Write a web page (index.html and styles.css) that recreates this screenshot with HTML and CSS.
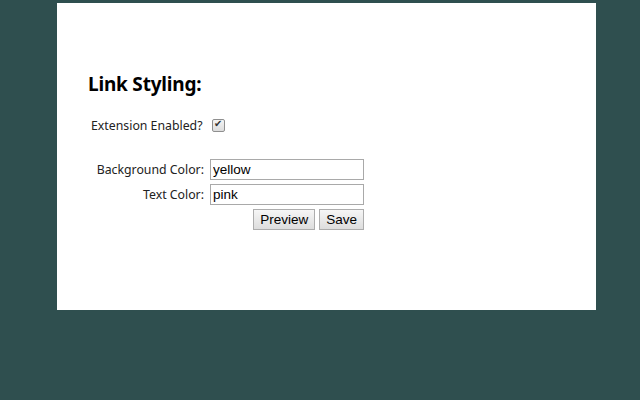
FILE: index.html
```html
<!DOCTYPE html>
<html lang="en">
<head>
  <meta charset="UTF-8">
  <title>Link Styling Options</title>
  <link rel="stylesheet" href="styles.css">
</head>
<body>
  <div class="panel">
    <h2 class="title">Link Styling:</h2>

    <div class="enabled-row">
      <label for="enabled">Extension Enabled?</label>
      <input type="checkbox" id="enabled" checked>
    </div>

    <div class="fields">
      <label for="bg">Background Color:</label>
      <input type="text" id="bg" value="yellow">
      <label for="fg">Text Color:</label>
      <input type="text" id="fg" value="pink">
      <div class="buttons">
        <button>Preview</button>
        <button>Save</button>
      </div>
    </div>
  </div>
</body>
</html>
```

FILE: styles.css
```css
body {
  margin: 0;
  background: #2f4f4f;
  font-family: "Noto Sans", "Open Sans", sans-serif;
  font-size: 12.3px;
  color: #222;
}

.panel {
  margin: 3px 0 0 57px;
  width: 508px;
  height: 307px;
  padding-left: 31px;
  background: #fff;
  overflow: hidden;
}

.title {
  margin: 0;
  padding-top: 68px;
  font-size: 19px;
  letter-spacing: -0.2px;
  line-height: 26px;
  font-weight: bold;
  color: #000;
}

.enabled-row {
  display: flex;
  align-items: center;
  margin-top: 18px;
  padding-left: 3px;
  height: 20px;
}

.enabled-row input {
  appearance: none;
  position: relative;
  box-sizing: border-box;
  margin: 1px 0 0 9px;
  width: 13px;
  height: 13px;
  border: 1px solid #8f8f8f;
  border-radius: 2px;
  background: linear-gradient(#f4f4f4, #dcdcdc);
}

.enabled-row input:checked::after {
  content: "\2714";
  position: absolute;
  left: 1px;
  top: -2px;
  font-size: 10px;
  color: #333;
}

.fields {
  display: grid;
  grid-template-columns: 116px 154px;
  column-gap: 6px;
  row-gap: 4px;
  margin-top: 24px;
  align-items: center;
}

.fields label {
  text-align: right;
}

.fields input {
  box-sizing: border-box;
  height: 21px;
  width: 154px;
  margin: 0;
  padding: 1px 2px;
  border: 1px solid #a9a9a9;
  font-family: "Liberation Sans", Arial, sans-serif;
  font-size: 13.5px;
  color: #000;
}

.buttons {
  grid-column: 2;
  display: flex;
  justify-content: flex-end;
  gap: 4px;
}

.buttons button {
  height: 21px;
  margin: 0;
  padding: 0 6px;
  border: 1px solid #adadad;
  border-radius: 0;
  background: linear-gradient(#f6f6f6, #dddddd);
  font-family: "Liberation Sans", Arial, sans-serif;
  font-size: 13.5px;
  color: #000;
}
```
